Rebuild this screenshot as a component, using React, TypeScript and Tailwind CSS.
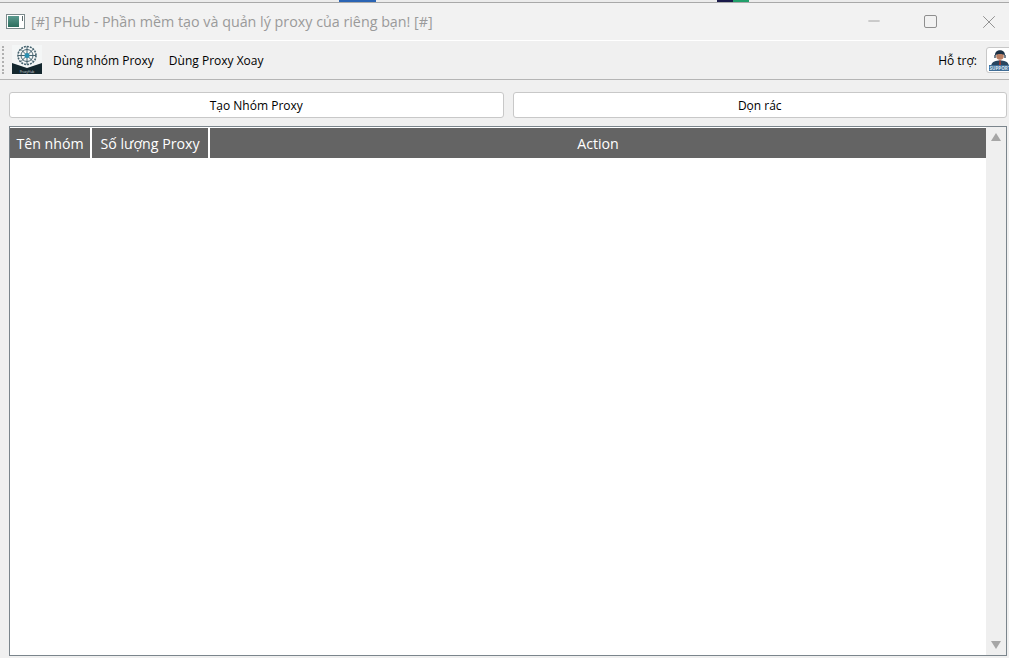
import { Minus, X } from "lucide-react"

function Logo() {
  return (
    <svg width="30" height="30" viewBox="0 0 30 30" className="shrink-0">
      <rect width="30" height="30" fill="#f4f6f6" />
      <path d="M0 18 L15 23 L30 18 V29 H0 Z" fill="#14272e" />
      <g fill="none" stroke="#45626e" strokeWidth="1">
        <circle cx="15" cy="10.5" r="9" strokeDasharray="2 1" strokeWidth="1.6" />
        <circle cx="15" cy="10.5" r="6" />
        <path d="M15 1.5V19.5M6 10.5H24M8.6 4.1L21.4 16.9M21.4 4.1L8.6 16.9" />
      </g>
      <circle cx="15" cy="10.5" r="2.5" fill="#2b8fb0" />
      <text x="15" y="27.5" fontSize="3.2" fill="#d5dcde" textAnchor="middle">ProxyHub</text>
    </svg>
  )
}

function SupportIcon() {
  return (
    <svg width="22" height="24" viewBox="0 0 22 24" className="shrink-0">
      <path d="M2 18 C3 13 7 12.5 11 12.5 C15 12.5 19 13 20 18 Z" fill="#27455f" />
      <circle cx="11" cy="8" r="3.8" fill="#b97f63" />
      <path d="M6 7.5 C5.5 0.5 16.5 0.5 16 7.5 C14 5.5 8 5.5 6 7.5 Z" fill="#1c3145" />
      <path d="M6 7 V10 M16 7 V10" stroke="#1c3145" strokeWidth="1.2" />
      <path d="M10.5 12H11.5L12 17H10Z" fill="#a83a2c" />
      <rect x="0" y="17" width="22" height="6" fill="#3f6d96" />
      <text x="11" y="22" fontSize="4.6" fontWeight="700" fill="#dbe6ef" textAnchor="middle">SUPPORT</text>
    </svg>
  )
}

export default function App() {
  return (
    <div className="flex flex-col w-[1009px] h-[658px] overflow-hidden bg-[#f0f0f0] font-['Open_Sans','Noto_Sans',sans-serif]">
      {/* Strip of desktop above the window */}
      <div className="flex h-[3px] shrink-0 bg-[#ececec] border-b border-[#a9a9a9]">
        <div className="w-[339px]" />
        <div className="w-[37px] bg-[#2a64b4]" />
        <div className="w-[341px]" />
        <div className="w-[16px] bg-[#1a1a4a]" />
        <div className="w-[16px] bg-[#22a06b]" />
      </div>

      {/* Title bar */}
      <div className="flex h-[37px] shrink-0 items-center bg-[#f2f2f2] pl-[6px]">
        <div className="flex h-[15px] w-[19px] shrink-0 border border-[#7c8a8c] bg-white p-px">
          <div className="w-[11px] bg-gradient-to-b from-[#5b9a8f] to-[#2c6e5e]" />
          <div className="ml-[3px] h-[5px] w-px bg-[#5b6b6d]" />
        </div>
        <span className="ml-[6px] text-[14.3px] text-[#9a9a9a]">[#] PHub - Phần mềm tạo và quản lý proxy của riêng bạn! [#]</span>
        <div className="ml-auto flex items-center pr-[9px] text-[#8a8a8a]">
          <Minus size={18} strokeWidth={1} className="-translate-y-px" />
          <div className="ml-[41px] h-[13px] w-[13px] rounded-[2px] border border-[#8f8f8f]" />
          <X size={22} strokeWidth={1} className="ml-[41px]" />
        </div>
      </div>

      {/* Toolbar */}
      <div className="flex h-[40px] shrink-0 items-center border-t border-b border-t-white border-b-[#b5b5b5] bg-[#f0f0f0] pl-[2px] text-[12px] text-black">
        <div className="h-[28px] w-[2px] border-l-2 border-dotted border-[#b0b0b0]" />
        <div className="ml-[8px]">
          <Logo />
        </div>
        <span className="ml-[11px] pt-[2px]">Dùng nhóm Proxy</span>
        <span className="ml-[15px] pt-[2px]">Dùng Proxy Xoay</span>
        <span className="ml-auto pt-[2px]">Hỗ trợ:</span>
        <div className="ml-[9px] -mr-[4px] flex h-[26px] w-[27px] shrink-0 items-center justify-center rounded-[3px] border border-[#c8c8c8] bg-white">
          <SupportIcon />
        </div>
      </div>

      {/* Content */}
      <div className="flex min-h-0 flex-1 flex-col pt-[12px] pr-[2px] pb-[2px] pl-[9px]">
        <div className="flex h-[26px] shrink-0 gap-[9px] text-[12px] text-black">
          <button className="flex-1 rounded-[3px] border border-[#c8c8c8] bg-white pt-[2px]">Tạo Nhóm Proxy</button>
          <button className="flex-1 rounded-[3px] border border-[#c8c8c8] bg-white pt-[2px]">Dọn rác</button>
        </div>

        <div className="mt-[8px] flex min-h-0 flex-1 border border-[#7b858c] bg-white">
          <div className="min-w-0 flex-1 pt-px">
            <div className="flex h-[30px] gap-[2px] text-[14.2px] text-white">
              <div className="flex w-[80px] items-center justify-center bg-[#646464] pt-[2px]">Tên nhóm</div>
              <div className="flex w-[116px] items-center justify-center bg-[#646464] pt-[2px]">Số lượng Proxy</div>
              <div className="flex flex-1 items-center justify-center bg-[#646464] pt-[2px]">Action</div>
            </div>
          </div>
          <div className="flex w-[20px] shrink-0 flex-col items-center justify-between bg-[#efefef] py-[6px]">
            <div className="h-0 w-0 border-x-[5px] border-b-[8px] border-x-transparent border-b-[#a6a6a6]" />
            <div className="h-0 w-0 border-x-[5px] border-t-[8px] border-x-transparent border-t-[#a6a6a6]" />
          </div>
        </div>
      </div>
    </div>
  )
}
